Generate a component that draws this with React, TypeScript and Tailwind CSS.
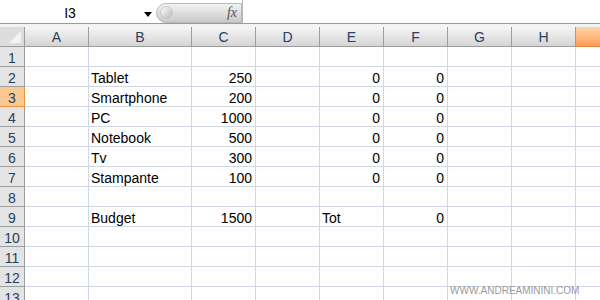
import React from 'react';

const cols = ['A', 'B', 'C', 'D', 'E', 'F', 'G', 'H', 'I'];

// cell values per row: B, C, E, F
const data: Record<number, { b?: string; c?: string; e?: string; f?: string; eLeft?: boolean }> = {
  2: { b: 'Tablet', c: '250', e: '0', f: '0' },
  3: { b: 'Smartphone', c: '200', e: '0', f: '0' },
  4: { b: 'PC', c: '1000', e: '0', f: '0' },
  5: { b: 'Notebook', c: '500', e: '0', f: '0' },
  6: { b: 'Tv', c: '300', e: '0', f: '0' },
  7: { b: 'Stampante', c: '100', e: '0', f: '0' },
  9: { b: 'Budget', c: '1500', e: 'Tot', f: '0', eLeft: true },
};

const rows = Array.from({ length: 13 }, (_, i) => i + 1);

const Cell = ({ children, right }: { children?: React.ReactNode; right?: boolean }) => (
  <div
    className={`h-[20px] border-r border-b border-[#d0d7e5] flex items-end overflow-hidden whitespace-nowrap ${
      right ? 'justify-end pr-[3px]' : 'pl-[2px]'
    }`}
  >
    {children}
  </div>
);

const App = () => {
  return (
    <div
      className="relative w-[600px] h-[300px] overflow-hidden bg-white text-black"
      style={{ fontFamily: '"Liberation Sans", Arial, sans-serif' }}
    >
      {/* Formula bar */}
      <div className="h-[23px] flex items-stretch bg-white">
        <div className="w-[156px] flex items-center relative">
          <span className="w-[140px] text-center text-[14px] leading-none mt-[3px] text-black">I3</span>
          <svg width="8" height="5" viewBox="0 0 8 5" className="absolute left-[144px] top-[12px]">
            <path d="M0 0 H8 L4 5 Z" fill="#000" />
          </svg>
        </div>
        <div className="w-[86px] flex items-center">
          <div className="w-[86px] h-[20px] mt-[2px] rounded-l-full bg-gradient-to-b from-[#f2f2f2] to-[#c9c9c9] border border-[#b9b9b9] flex items-center justify-between pl-[3px] pr-[4px]">
            <div className="w-[13px] h-[13px] rounded-full bg-gradient-to-br from-[#ffffff] to-[#b8b8b8] border border-[#c8c8c8]" />
            <span
              className="text-[14px] italic leading-none text-[#555]"
              style={{ fontFamily: '"Liberation Serif", serif' }}
            >
              fx
            </span>
          </div>
        </div>
        <div className="flex-1 border-l border-[#b9b9b9] bg-white" />
      </div>
      <div className="h-[1px] bg-[#9a9a9a]" />
      <div className="h-[3px] bg-[#f2f2f2]" />

      {/* Grid */}
      <div
        className="grid text-[14px] leading-[16px]"
        style={{ gridTemplateColumns: '25px 64px 103px 64px 64px 64px 64px 64px 64px 24px' }}
      >
        {/* corner */}
        <div className="h-[20px] bg-[#dcdcdc] border-r border-b border-[#9c9c9c] relative">
          <svg width="12" height="12" viewBox="0 0 12 12" className="absolute right-[3px] bottom-[3px]">
            <path d="M12 0 V12 H0 Z" fill="#f3f3f3" />
          </svg>
        </div>
        {cols.map((c) =>
          c === 'I' ? (
            <div
              key={c}
              className="h-[20px] bg-gradient-to-b from-[#ffd5a8] to-[#ff9d55] border-b border-[#e98a3a]"
            />
          ) : (
            <div
              key={c}
              className="h-[20px] bg-gradient-to-b from-[#f6f6f6] to-[#d5d5d5] border-r border-b border-[#9c9c9c] flex items-center justify-center text-[#27415f]"
            >
              {c}
            </div>
          )
        )}

        {rows.map((r) => {
          const d = data[r] || {};
          const sel = r === 3;
          return (
            <React.Fragment key={r}>
              <div
                className={`h-[20px] flex items-end justify-center border-r border-b ${
                  sel
                    ? 'bg-[#f9c994] border-[#f29536] text-[#27415f]'
                    : 'bg-[#e4e4e4] border-[#9c9c9c] text-[#27415f]'
                }`}
              >
                {r}
              </div>
              <Cell />
              <Cell>{d.b}</Cell>
              <Cell right>{d.c}</Cell>
              <Cell />
              {d.eLeft ? <Cell>{d.e}</Cell> : <Cell right>{d.e}</Cell>}
              <Cell right>{d.f}</Cell>
              <Cell />
              <Cell />
              <div className="h-[20px] border-b border-[#d0d7e5]" />
            </React.Fragment>
          );
        })}
      </div>

      {/* watermark */}
      <div className="absolute left-[450px] top-[286px] text-[10px] leading-none text-[#9a9a9a]">
        WWW.ANDREAMININI.COM
      </div>
    </div>
  );
};

export default App;
